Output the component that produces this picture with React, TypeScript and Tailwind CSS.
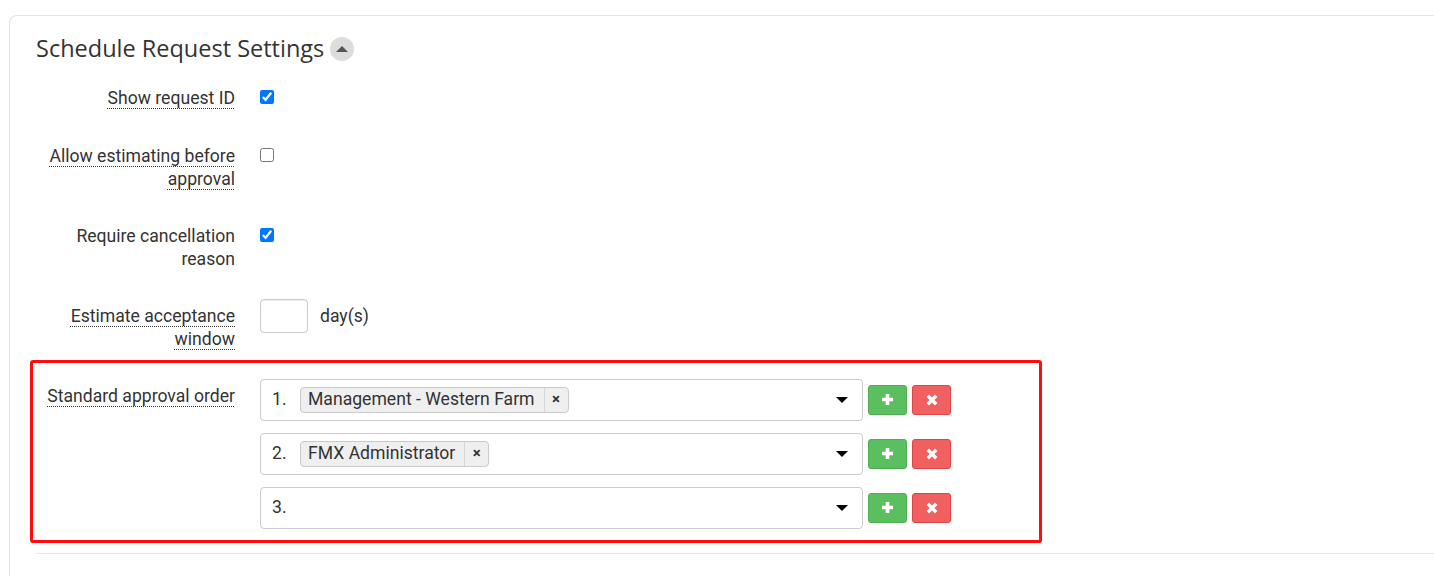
import React from "react";

const labelCls =
  "underline decoration-dotted decoration-[#333] underline-offset-[4px] decoration-1";

function Plus() {
  return (
    <svg width="13" height="13" viewBox="0 0 13 13">
      <path d="M6.5 1v11M1 6.5h11" stroke="white" strokeWidth="3.6" />
    </svg>
  );
}

function Cross() {
  return (
    <svg width="12" height="12" viewBox="0 0 12 12">
      <path d="M1.8 1.8l8.4 8.4M10.2 1.8l-8.4 8.4" stroke="white" strokeWidth="3.4" />
    </svg>
  );
}

function Tag({ text }: { text: string }) {
  return (
    <span className="flex items-center h-[26px] bg-[#efefef] border border-[#cacaca] rounded-[4px]">
      <span className="pl-[7px] pr-[9px]">{text}</span>
      <span className="h-full w-[24px] flex items-center justify-center border-l border-[#d6d6d6] text-[15px] font-bold">
        ×
      </span>
    </span>
  );
}

function ApprovalSelect({ n, tag }: { n: number; tag?: string }) {
  return (
    <div className="flex items-start gap-[5px]">
      <div className="w-[603px] h-[42px] border border-[#cccccc] rounded-[4px] flex items-center pl-[11px] pr-[14px]">
        <span className="w-[28px]">{n}.</span>
        {tag && <Tag text={tag} />}
        <span className="ml-auto w-0 h-0 border-l-[6px] border-r-[6px] border-t-[6px] border-l-transparent border-r-transparent border-t-black" />
      </div>
      <div className="flex gap-[5px] mt-[6px]">
        <button className="w-[39px] h-[30px] bg-[#5cbf5f] border border-[#4cae4c] rounded-[3px] flex items-center justify-center">
          <Plus />
        </button>
        <button className="w-[39px] h-[30px] bg-[#f06060] border border-[#e04444] rounded-[3px] flex items-center justify-center">
          <Cross />
        </button>
      </div>
    </div>
  );
}

function Row({
  label,
  dotted = true,
  children,
  className = "",
}: {
  label: string;
  dotted?: boolean;
  children?: React.ReactNode;
  className?: string;
}) {
  return (
    <div className={"flex items-start gap-[25px] " + className}>
      <div className="w-[199px] text-right leading-[23.5px]">
        <span className={dotted ? labelCls : ""}>{label}</span>
      </div>
      {children}
    </div>
  );
}

export default function App() {
  return (
    <div
      className="w-full h-[576px] bg-white pt-[15px] pl-[9px] overflow-hidden text-[17.6px] text-[#333]"
      style={{ fontFamily: "Roboto, 'Liberation Sans', sans-serif" }}
    >
      <div className="h-full border-t border-l border-[#e3e3e3] rounded-tl-[8px] pt-[19px] pl-[26px]">
        <h1
          className="flex items-center text-[23.5px] leading-[26px] text-[#333] mb-[26px]"
          style={{ fontFamily: "'Open Sans', 'Noto Sans', sans-serif" }}
        >
          Schedule Request Settings
          <span className="ml-[6px] mt-[2px] w-[24px] h-[24px] rounded-full bg-[#dcdcdc] flex items-center justify-center">
            <span className="w-0 h-0 border-l-[6px] border-r-[6px] border-b-[6px] border-l-transparent border-r-transparent border-b-[#555] -mt-[1px]" />
          </span>
        </h1>

        <Row label="Show request ID" className="mb-[34px]">
          <input type="checkbox" defaultChecked className="w-[14px] h-[14px] m-0 mt-[3px]" />
        </Row>
        <Row label="Allow estimating before approval" className="mb-[33px]">
          <input type="checkbox" className="w-[14px] h-[14px] m-0 mt-[3px]" />
        </Row>
        <Row label="Require cancellation reason" dotted={false} className="mb-[33px]">
          <input type="checkbox" defaultChecked className="w-[14px] h-[14px] m-0 mt-[3px]" />
        </Row>
        <Row label="Estimate acceptance window" className="mb-[8px]">
          <div className="flex items-start gap-[12px] -mt-[6px]">
            <input
              type="text"
              className="w-[48px] h-[34px] border border-[#cccccc] rounded-[4px] shadow-[inset_0_1px_1px_rgba(0,0,0,0.075)] outline-none"
            />
            <span className="leading-[23.5px] mt-[6px]">day(s)</span>
          </div>
        </Row>

        <div className="-ml-[6px] w-[1012px] border-[3px] border-[#ff0d0d] rounded-[3px] pt-[22px] pb-[11px] pl-[3px]">
          <Row label="Standard approval order">
            <div className="flex flex-col gap-[12px] -mt-[6px]">
              <ApprovalSelect n={1} tag="Management - Western Farm" />
              <ApprovalSelect n={2} tag="FMX Administrator" />
              <ApprovalSelect n={3} />
            </div>
          </Row>
        </div>

        <div className="mt-[10px] border-t border-[#e8e8e8]" />
      </div>
    </div>
  );
}
